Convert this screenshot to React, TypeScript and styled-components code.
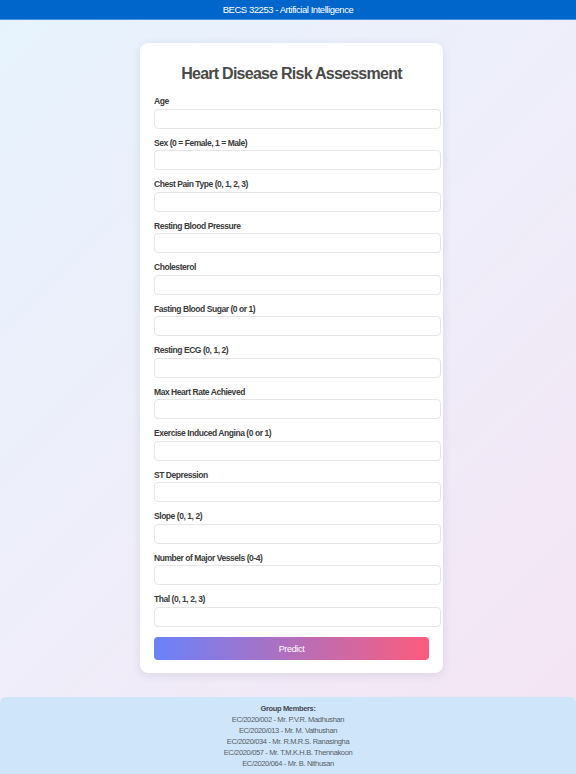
import React from "react";
import styled, { createGlobalStyle } from "styled-components";

const GlobalStyle = createGlobalStyle`
  html, body {
    margin: 0;
    padding: 0;
  }
  body {
    font-family: "Liberation Sans", Arial, sans-serif;
    background: linear-gradient(135deg, #e6f3fd 0%, #efeefa 50%, #f4e3f3 100%);
    min-height: 774px;
  }
  * { box-sizing: border-box; }
`;

const Page = styled.div`
  min-height: 774px;
  display: flex;
  flex-direction: column;
`;

const Header = styled.header`
  height: 20px;
  background: #0066cc;
  border-bottom: 1px solid #4a92dc;
  color: #ffffff;
  font-size: 9.5px;
  letter-spacing: -0.45px;
  display: flex;
  align-items: center;
  justify-content: center;
`;

const Main = styled.main`
  display: flex;
  justify-content: center;
  padding: 23px 0 0 7px;
  flex: 1;
`;

const Card = styled.form`
  width: 303px;
  background: #ffffff;
  border-radius: 8px;
  box-shadow: 0 2px 10px rgba(60, 60, 110, 0.12);
  padding: 21px 14px 13px;
  display: flex;
  flex-direction: column;
`;

const Title = styled.h2`
  margin: 0 0 12px;
  font-size: 16px;
  line-height: 20px;
  letter-spacing: -0.75px;
  font-weight: 700;
  color: #4a4a4a;
  text-align: center;
`;

const Field = styled.div`
  display: flex;
  flex-direction: column;
  margin-bottom: 9px;
`;

const Label = styled.label`
  font-size: 8.5px;
  line-height: 10px;
  font-weight: 700;
  color: #3a3a3a;
  letter-spacing: -0.45px;
  margin-bottom: 2.5px;
`;

const Input = styled.input`
  box-sizing: content-box;
  width: 100%;
  height: 18px;
  padding: 0 5px;
  border: 1px solid #e6e6e6;
  border-radius: 4px;
  background: #ffffff;
  font-family: inherit;
  font-size: 8px;
  outline: none;
`;

const Button = styled.button`
  margin-top: 1.5px;
  height: 23px;
  width: 100%;
  border: none;
  border-radius: 4px;
  background: linear-gradient(90deg, #6a82fb 0%, #fc5c7d 100%);
  color: #ffffff;
  font-family: inherit;
  font-size: 9px;
  letter-spacing: -0.35px;
  cursor: pointer;
`;

const Footer = styled.footer`
  margin-top: 24px;
  background: #cfe6fa;
  border-radius: 6px 6px 0 0;
  padding: 5.5px 0;
  text-align: center;
  color: #555c66;
  font-size: 7.5px;
  line-height: 11px;
  letter-spacing: -0.35px;
`;

const FooterTitle = styled.div`
  font-weight: 700;
  color: #44484f;
`;

const Member = styled.div``;

const fields = [
  "Age",
  "Sex (0 = Female, 1 = Male)",
  "Chest Pain Type (0, 1, 2, 3)",
  "Resting Blood Pressure",
  "Cholesterol",
  "Fasting Blood Sugar (0 or 1)",
  "Resting ECG (0, 1, 2)",
  "Max Heart Rate Achieved",
  "Exercise Induced Angina (0 or 1)",
  "ST Depression",
  "Slope (0, 1, 2)",
  "Number of Major Vessels (0-4)",
  "Thal (0, 1, 2, 3)",
];

const members = [
  "EC/2020/002 - Mr. P.V.R. Madhushan",
  "EC/2020/013 - Mr. M. Vathushan",
  "EC/2020/034 - Mr. R.M.R.S. Ranasingha",
  "EC/2020/057 - Mr. T.M.K.H.B. Thennakoon",
  "EC/2020/064 - Mr. B. Nithusan",
];

export default function App() {
  return (
    <>
      <GlobalStyle />
      <Page>
        <Header>BECS 32253 - Artificial Intelligence</Header>
        <Main>
          <Card onSubmit={(e) => e.preventDefault()}>
            <Title>Heart Disease Risk Assessment</Title>
            {fields.map((f, i) => (
              <Field key={f}>
                <Label htmlFor={`f${i}`}>{f}</Label>
                <Input id={`f${i}`} type="text" />
              </Field>
            ))}
            <Button type="submit">Predict</Button>
          </Card>
        </Main>
        <Footer>
          <FooterTitle>Group Members:</FooterTitle>
          {members.map((m) => (
            <Member key={m}>{m}</Member>
          ))}
        </Footer>
      </Page>
    </>
  );
}
